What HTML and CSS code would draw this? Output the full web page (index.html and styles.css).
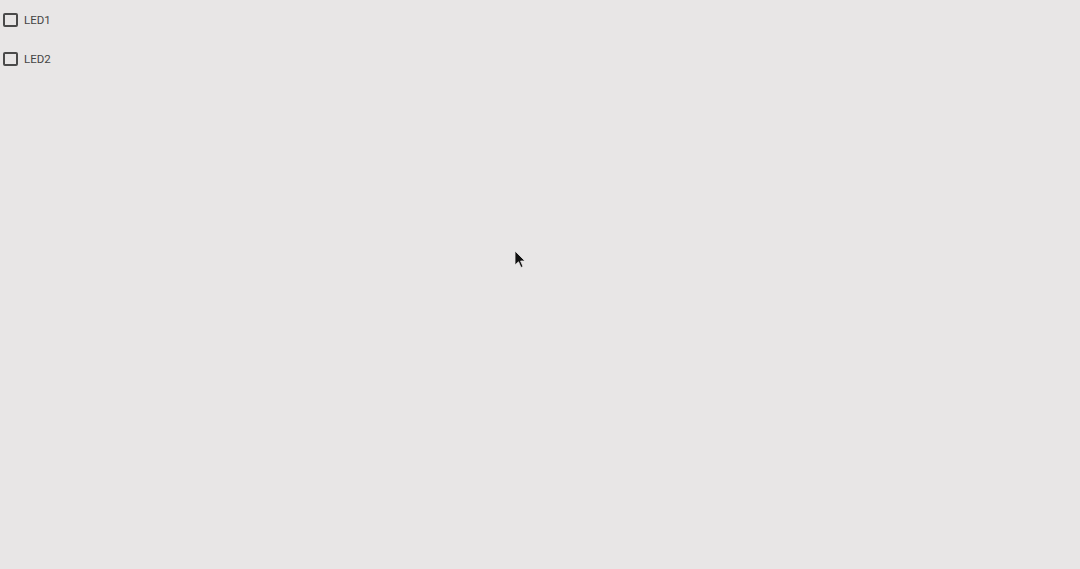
FILE: index.html
```html
<!DOCTYPE html>
<html>
<head>
<meta charset="utf-8">
<link rel="stylesheet" href="styles.css">
</head>
<body>
<div class="list">
  <label class="row"><span class="box"></span><span class="lbl">LED1</span></label>
  <label class="row"><span class="box"></span><span class="lbl">LED2</span></label>
</div>
<svg class="cursor" width="14" height="20" viewBox="0 0 14 20">
  <path d="M1 1 L1 15 L4.5 11.8 L7 17.5 L9 16.6 L6.6 11 L11 11 Z" fill="#111" stroke="#e8e6e6" stroke-width="0.8"/>
</svg>
</body>
</html>
```
FILE: styles.css
```css
html, body {
  margin: 0;
  padding: 0;
  background: #e8e6e6;
  width: 1080px;
  height: 569px;
  overflow: hidden;
}
body {
  font-family: Roboto, "Liberation Sans", sans-serif;
  position: relative;
}
.list {
  display: flex;
  flex-direction: column;
}
.row {
  display: flex;
  align-items: center;
  height: 39px;
  padding-left: 3px;
}
.box {
  box-sizing: border-box;
  width: 15px;
  height: 14px;
  border: 2px solid #4a4a4a;
  border-radius: 2px;
}
.lbl {
  margin-left: 6px;
  font-size: 11.5px;
  color: #444;
  line-height: 14px;
}
.cursor {
  position: absolute;
  left: 514px;
  top: 250px;
}
```
